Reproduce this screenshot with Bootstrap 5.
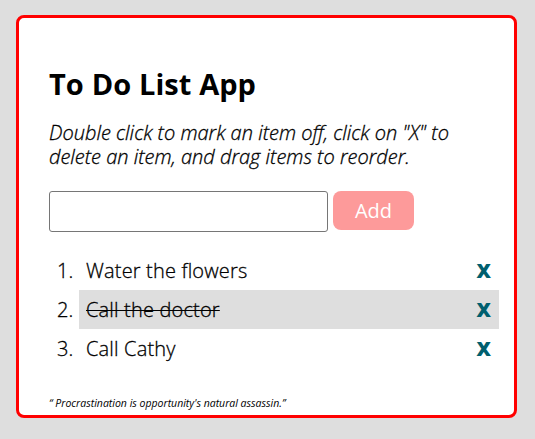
<!DOCTYPE html>
<html lang="en">
<head>
<meta charset="utf-8">
<title>To Do List App</title>
<link href="https://cdn.jsdelivr.net/npm/bootstrap@5.3.0/dist/css/bootstrap.min.css" rel="stylesheet">
<style>
body{background:#dedede;font-family:"Open Sans",sans-serif;font-size:20px;font-weight:300;line-height:24px;color:#000;padding:15px 18px 0 16px;height:439px;overflow:hidden}
.app{height:403px;border:3px solid #f00;border-radius:8px;background:#fff;padding:47px 15px 0 30px}
h1{font-size:29px;font-weight:700;line-height:38px;margin:0 0 18px;word-spacing:.4px}
.intro{margin:0 0 22px;width:420px;-webkit-text-stroke:.3px #000}
.entry{width:279px;height:41px;border:1px solid #767676;border-radius:3px;padding:0 8px}
.add,.add:hover{width:81px;height:39px;background:#fd9a9a;color:#fff;border:0;border-radius:8px;font-size:20px;font-weight:400;padding:0}
.entry-row{gap:5px}
.todo{list-style:none;margin:19px 0 0;padding:0}
.todo li{height:39px;line-height:39px}
.num{width:30px;padding-left:8px}
.num,.task span{-webkit-text-stroke:.3px #000;letter-spacing:.17px}
.task{padding:0 8px 0 7px}
.done{background:#dedede}
.done span{text-decoration:line-through;text-decoration-thickness:1px}
.del{font-weight:800;font-size:20px;color:#005f6f;background:none;border:0;padding:0}
.quote{font-size:10.5px;font-weight:400;line-height:14px;margin:28px 0 0}
</style>
</head>
<body>
<main class="app">
<h1>To Do List App</h1>
<p class="intro fst-italic">Double click to mark an item off, click on "X" to delete an item, and drag items to reorder.</p>
<form class="entry-row d-flex align-items-start">
<input class="entry" type="text" aria-label="New item">
<button class="add btn" type="button">Add</button>
</form>
<ol class="todo">
<li class="d-flex"><div class="num">1.</div><div class="task d-flex flex-grow-1 justify-content-between"><span>Water the flowers</span><button class="del" type="button">X</button></div></li>
<li class="d-flex"><div class="num">2.</div><div class="task done d-flex flex-grow-1 justify-content-between"><span>Call the doctor</span><button class="del" type="button">X</button></div></li>
<li class="d-flex"><div class="num">3.</div><div class="task d-flex flex-grow-1 justify-content-between"><span>Call Cathy</span><button class="del" type="button">X</button></div></li>
</ol>
<p class="quote fst-italic">“ Procrastination is opportunity's natural assassin.”</p>
</main>
<script src="https://cdn.jsdelivr.net/npm/bootstrap@5.3.0/dist/js/bootstrap.bundle.min.js"></script>
</body>
</html>
